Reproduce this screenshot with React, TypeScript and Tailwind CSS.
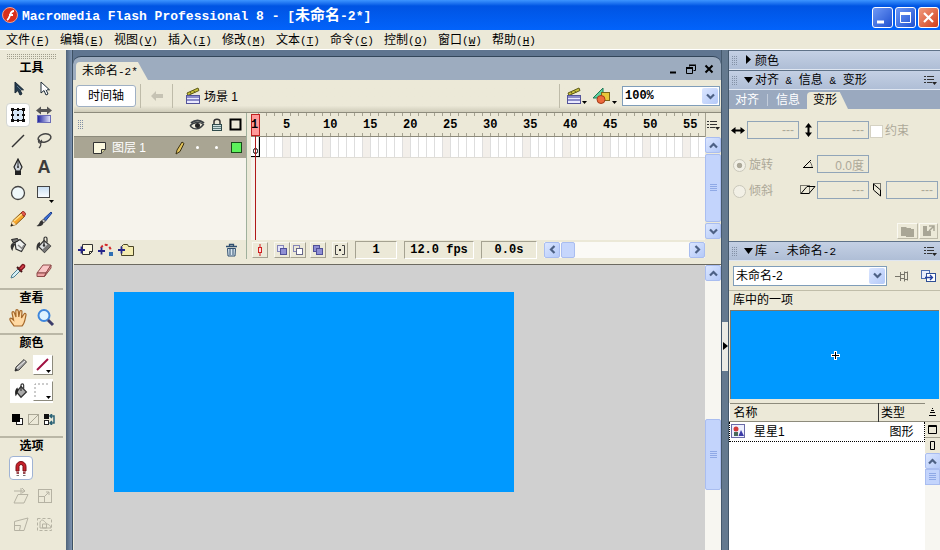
import { useState } from "react";
import type { ReactNode } from "react";
import clsx from "clsx";

const MENUS = [
  ["文件", "F"],
  ["编辑", "E"],
  ["视图", "V"],
  ["插入", "I"],
  ["修改", "M"],
  ["文本", "T"],
  ["命令", "C"],
  ["控制", "O"],
  ["窗口", "W"],
  ["帮助", "H"],
];

const FRAMES = Array.from({ length: 57 }, (_, i) => i + 1);

type IconProps = { w?: number; h?: number; box?: string; children: ReactNode };

const Icon = ({ w = 18, h = 18, box, children }: IconProps) => (
  <svg
    width={w}
    height={h}
    viewBox={box ?? `0 0 ${w} ${h}`}
    fill="none"
    className="shrink-0"
    aria-hidden="true">
    {children}
  </svg>
);

// Latin letters sit at about half the width of a Chinese glyph
const Latin = ({ children }: { children: ReactNode }) => (
  <span className="font-['Liberation_Mono','Noto_Sans_CJK_SC',monospace] text-[11px] whitespace-pre">
    {children}
  </span>
);

/* ---------- tool icons ---------- */

const Arrow = ({ fill }: { fill: string }) => (
  <Icon>
    <path d="M6 2v11l3-2.500 2 4.500 2-1-2-4.200h3.500z" fill={fill} stroke="#1c2b38" />
    <path d="M8 6l4 4" stroke={fill === "white" ? "white" : "#5f7a92"} />
  </Icon>
);

const FreeTransform = () => (
  <Icon>
    <rect x="3.500" y="3.500" width="11" height="11" fill="#d5e6f6" stroke="#111" />
    {[2, 8, 13].map((x) =>
      [2, 8, 13].map((y) => (
        <rect
          key={`${x}-${y}`}
          x={x}
          y={y}
          width={x === 8 ? 2 : 3}
          height={y === 8 ? 2 : 3}
          fill="#111"
        />
      ))
    )}
  </Icon>
);

const GradientTool = () => (
  <Icon>
    <defs>
      <linearGradient id="blueRamp">
        <stop offset="0" stopColor="#1b1f9a" />
        <stop offset="1" stopColor="#e6e8ff" />
      </linearGradient>
    </defs>
    <path d="M1 4.500l5-4v2.500h6V.5l5 4-5 4V6H6v2.500z" fill="#555" />
    <rect x="2.500" y="9.500" width="13" height="7" fill="url(#blueRamp)" stroke="#6a6cb8" />
  </Icon>
);

const LineTool = () => (
  <Icon>
    <path d="M3 15L15 3" stroke="#333" strokeWidth="1.400" />
  </Icon>
);

const Lasso = () => (
  <Icon>
    <ellipse cx="9.500" cy="6" rx="6.500" ry="4" stroke="#444" strokeWidth="1.500" transform="rotate(-12 9.5 6)" />
    <path d="M5 8c-2 0-2 3 0 3s2-2 1-3M5 11c2 1 0 4-1 5" stroke="#444" strokeWidth="1.300" />
  </Icon>
);

const Pen = () => (
  <Icon>
    <path d="M9 1L5 9l2 4h4l2-4z" fill="#cfd6dd" stroke="#222" strokeWidth="1.200" />
    <path d="M9 2v6" stroke="#222" />
    <circle cx="9" cy="9" r="1" fill="#222" />
    <rect x="6" y="13" width="6" height="4" fill="#222" />
  </Icon>
);

const TextTool = () => (
  <span className="font-['Liberation_Sans',sans-serif] text-[18px] leading-5 font-bold text-[#3c3c3c]">
    A
  </span>
);

const Oval = () => (
  <Icon>
    <circle cx="9" cy="9" r="6.500" fill="#f0f8fa" stroke="#444" strokeWidth="1.300" />
  </Icon>
);

const RectTool = () => (
  <Icon w={20} h={20}>
    <defs>
      <linearGradient id="skyFill" x2="0" y2="1">
        <stop offset="0" stopColor="#c8def2" />
        <stop offset="1" stopColor="#fbfdff" />
      </linearGradient>
    </defs>
    <rect x="3.500" y="3.500" width="12" height="11" fill="url(#skyFill)" stroke="#444" />
    <path d="M15 17h5l-2.500 3z" fill="black" />
  </Icon>
);

const Pencil = () => (
  <Icon>
    <path d="M2 16l1.500-5L12 3l3.500 3.500L7 14.500z" fill="#f6a52a" stroke="#8a5a13" />
    <path d="M12 3l1.500-1.500c1-.8 3.700 2 3 3L15 6.500z" fill="#e0564a" stroke="#8f2c22" />
    <path d="M5 11l8-7" stroke="#ffe08a" strokeWidth="1.500" />
    <path d="M2 16l1.500-5L7 14.500z" fill="#f4dfb8" />
    <path d="M1.500 16.500l1-3 2 2z" fill="#222" />
  </Icon>
);

const Brush = () => (
  <Icon>
    <path d="M16 2L8.500 9l2 2L17 3z" fill="#3a6fd8" stroke="#1e3f8f" />
    <path d="M8.500 9l2 2-2 2-2-2z" fill="#c9c9c9" stroke="#555" />
    <path d="M7 10.500C4 11 5 14.500 1.500 16c4 1 7-1 7-3.500z" fill="#333" />
  </Icon>
);

const InkBottle = () => (
  <Icon>
    <path d="M6 6.500l5-3 5.500 5-4 7L7 13z" fill="#eef0ee" stroke="#333" strokeWidth="1.200" />
    <path d="M2.500 3.500l6-1 1 2-5 2.500z" fill="#777" stroke="#222" />
    <path d="M4 7c-3.500 1-2.500 6-.5 8 .5-3 1-5 3.500-7z" fill="#333" />
    <path d="M9 9l4 3.500 2-3.500" stroke="#888" strokeWidth="1.500" />
  </Icon>
);

const PaintBucket = () => (
  <Icon>
    <path d="M9 4.500l6.500 5.500-6 6.500-6-6z" fill="#dcdfe0" stroke="#333" strokeWidth="1.200" />
    <path d="M9 9V2.500c0-2 3-2 3 0v4" stroke="#333" strokeWidth="1.200" />
    <path d="M7 14l6-6 2.500 2-6 6.500z" fill="#777" />
    <path d="M5 6C1.500 7 1 11 2 15c1.500-2 1-4 3-6z" fill="#333" />
    <circle cx="9" cy="9.500" r="1.200" fill="#333" />
  </Icon>
);

const Eyedropper = () => (
  <Icon>
    <path d="M2 16l1-3 6-6 2 2-6 6z" fill="#d5eff5" stroke="#4f7f90" />
    <path d="M8 5l5 5" stroke="#3d1216" strokeWidth="2" />
    <path d="M10 6.500L13 3c1-1.500 3.500.5 2.500 2L12 8.500z" fill="#d8404a" stroke="#7e1a22" strokeWidth="1.300" />
  </Icon>
);

const Eraser = () => (
  <Icon>
    <path d="M2 11l6-8h8l-5 8z" fill="#f9c6c6" stroke="#8e4a4a" />
    <path d="M2 11v3.500h7.500L11 11zM11 11l5-8v3l-6.500 8.500z" fill="#eda3a3" stroke="#8e4a4a" />
  </Icon>
);

const Hand = () => (
  <Icon w={20} h={20}>
    <path
      d="M6 18C4 15 1 12 2 10.500c1-1 2.500.5 3.500 1.500L4 5c0-1.800 2-1.800 2.500 0L8 9 7.800 3c0-1.800 2.200-1.800 2.500 0l.5 6 1-5.500c.4-1.500 2.300-1.200 2.200.3L13.500 10 16 6c.8-1.400 2.400-.5 2 1-1 4-1 8-4 11z"
      fill="#ffd9a3"
      stroke="#a5682a"
      strokeWidth="1.200"
    />
  </Icon>
);

const Magnifier = () => (
  <Icon w={20} h={20}>
    <circle cx="8" cy="7.500" r="5.500" fill="#dff3ff" stroke="#3e86dc" strokeWidth="2" />
    <path d="M12 12l5 5" stroke="#3d3d6b" strokeWidth="3" />
  </Icon>
);

const StrokePencil = () => (
  <Icon w={16} h={16}>
    <path d="M2 14l1-4 8-7.500 2.500 2.500L6 13z" fill="#a5a5a5" stroke="#444" />
    <path d="M4 11l8-7" stroke="#eee" />
    <path d="M2 14l.7-2.500L5 13z" fill="#222" />
  </Icon>
);

const MiniBucket = () => (
  <Icon w={16} h={16} box="0 0 18 18">
    <path d="M9 4l6 6-6 6-5-6z" fill="#aaa" stroke="#333" strokeWidth="1.500" />
    <path d="M9 9V2.500c0-2 3-2 3 0v4" stroke="#333" strokeWidth="1.300" />
    <path d="M5 5C2 7 2 11 3 15c2-2 1-4 3-6z" fill="#222" />
  </Icon>
);

const Magnet = () => (
  <Icon>
    <path d="M4 12V7.500a5 5 0 0110 0V12h-3V7.500a2 2 0 00-4 0V12z" fill="#c8202a" stroke="#7a0f16" />
    <path d="M4.500 14H7M11 14h2.500" stroke="#7a0f16" strokeWidth="1.500" />
    <path d="M4.500 16.500H7M11 16.500h2.500" stroke="#777" />
  </Icon>
);

const GhostSkew = () => (
  <Icon>
    <path d="M6 7.500h10L12 16H2zM2 4h11M9 1v6M10 1l3 3-3 2" stroke="#b5b2a3" />
  </Icon>
);
const GhostScale = () => (
  <Icon>
    <rect x="2.500" y="2.500" width="13" height="13" stroke="#b5b2a3" />
    <rect x="2.500" y="9.500" width="6" height="6" stroke="#b5b2a3" />
    <path d="M9 9l4-4M10 5h3v3" stroke="#b5b2a3" />
  </Icon>
);
const GhostDistort = () => (
  <Icon>
    <path d="M2.500 6.500L16 3l-4 12.500H2.500z" stroke="#b5b2a3" />
    <path d="M2.500 10.500h6l-1 5" stroke="#b5b2a3" />
  </Icon>
);
const GhostEnvelope = () => (
  <Icon>
    <rect x="1.500" y="3.500" width="14" height="12" stroke="#b5b2a3" strokeDasharray="3 2" />
    <path d="M4 13V7c2-4 4-1 6 1s4 1 5 5z" stroke="#b5b2a3" />
    <path d="M6.500 13V9h4v4z" stroke="#b5b2a3" />
  </Icon>
);

const TOOLS = [
  { name: "选择", icon: <Arrow fill="#243a4d" /> },
  { name: "部分选取", icon: <Arrow fill="white" /> },
  { name: "任意变形", icon: <FreeTransform /> },
  { name: "填充变形", icon: <GradientTool /> },
  { name: "线条", icon: <LineTool /> },
  { name: "套索", icon: <Lasso /> },
  { name: "钢笔", icon: <Pen /> },
  { name: "文本", icon: <TextTool /> },
  { name: "椭圆", icon: <Oval /> },
  { name: "矩形", icon: <RectTool /> },
  { name: "铅笔", icon: <Pencil /> },
  { name: "刷子", icon: <Brush /> },
  { name: "墨水瓶", icon: <InkBottle /> },
  { name: "颜料桶", icon: <PaintBucket /> },
  { name: "滴管", icon: <Eyedropper /> },
  { name: "橡皮擦", icon: <Eraser /> },
];

/* ---------- small shared pieces ---------- */

const Clapper = () => (
  <Icon w={16} h={18}>
    <path d="M2 6l11-5 1 2.500L3 8.500z" fill="#c9c23c" stroke="#5e5a18" />
    <path d="M5 5l1.500 2M8.500 3.500L10 5.500" stroke="#5e5a18" />
    <rect x="1.500" y="8.500" width="13" height="8" fill="#e9e9ff" stroke="#54549a" />
    <path d="M2 10h12M2 13h12" stroke="#6c6cb8" strokeWidth="1.500" />
  </Icon>
);

const Chevron = ({ turn = "" }: { turn?: string }) => (
  <svg width="9" height="9" viewBox="0 0 9 9" fill="none" className={turn} aria-hidden="true">
    <path d="M1 2.500L4.500 6 8 2.500" stroke="#4d6185" strokeWidth="2.200" />
  </svg>
);

const ScrollButton = ({ label, turn }: { label: string; turn?: string }) => (
  <button
    aria-label={label}
    className="flex size-4 shrink-0 items-center justify-center rounded-xs border border-[#a9bdf0] bg-gradient-to-br from-[#dbe6ff] to-[#b4c9f8]">
    <Chevron turn={turn} />
  </button>
);

const ThumbLines = () => (
  <Icon w={7} h={8}>
    <path d="M0 .5h7M0 2.500h7M0 4.500h7M0 6.500h7" stroke="#8fa9e6" />
  </Icon>
);

const Grip = () => (
  <span className="grid shrink-0 grid-cols-3 gap-px" aria-hidden="true">
    {Array.from({ length: 15 }, (_, i) => (
      <i key={i} className="size-px bg-[#8290a5]" />
    ))}
  </span>
);

const OptionsMenu = () => (
  <button aria-label="面板选项" className="shrink-0">
    <Icon w={13} h={11}>
      <path d="M0 1.500h2M0 4.500h2M0 7.500h2M3 1.500h7M3 4.500h7M3 7.500h5" stroke="#333" />
      <path d="M8 7h5l-2.500 3z" fill="#222" />
    </Icon>
  </button>
);

type ComboProps = { label: string; value: string; className: string };

const Combo = ({ label, value, className }: ComboProps) => (
  <div className={clsx("relative flex h-5 border border-[#7f9db9] bg-white", className)}>
    <select
      aria-label={label}
      defaultValue={value}
      className="w-full appearance-none bg-transparent pl-[2px] outline-none">
      <option>{value}</option>
    </select>
    <span className="pointer-events-none absolute inset-y-px right-px flex w-4 items-center justify-center rounded-xs bg-gradient-to-br from-[#dbe6ff] to-[#b4c9f8]">
      <Chevron />
    </span>
  </div>
);

type PanelHeaderProps = { open: boolean; children: ReactNode; options?: boolean };

const PanelHeader = ({ open, children, options }: PanelHeaderProps) => (
  <header className="flex h-5 shrink-0 items-center border-t border-b border-t-[#5f7288] border-b-[#dfe6f1] bg-gradient-to-b from-[#c4d0e4] to-[#afbed6] px-[3px]">
    <Grip />
    <button className="flex flex-1 items-center gap-px pl-[7px] text-left">
      <Icon w={10} h={10}>
        {open ? <path d="M0 2h9L4.500 8z" fill="black" /> : <path d="M2 0v9l5-4.500z" fill="black" />}
      </Icon>
      <span className="pt-px">{children}</span>
    </button>
    {options && <OptionsMenu />}
  </header>
);

/* ---------- chrome ---------- */

const TitleBar = () => (
  <header className="flex h-[30px] shrink-0 items-center bg-gradient-to-b from-[#3d95ff] via-[#0054e3] via-20% to-[#0263fb] pr-[1px] pl-[2px]">
    <Icon w={16} h={16}>
      <circle cx="8" cy="8" r="7.500" fill="#d8301c" stroke="#f5a08f" />
      <path d="M5 13c2-1 2.500-3 3.200-5.500C9 5 10 4 12 4M7 8h4" stroke="white" strokeWidth="1.800" />
    </Icon>
    <h1 className="flex-1 pt-1 pl-1 font-['Liberation_Mono','Noto_Sans_CJK_SC',monospace] text-[13px] leading-5 font-bold whitespace-nowrap text-white">
      Macromedia Flash Professional 8 - [<span className="text-[15px]">未命名</span>-2*]
    </h1>
    <div className="flex gap-[2px] pt-1">
      <button aria-label="最小化" className="rounded-[3px] border border-white bg-gradient-to-br from-[#6f98f5] to-[#1f4fd0]">
        <Icon w={19} h={19}>
          <path d="M4 14h7" stroke="white" strokeWidth="3" />
        </Icon>
      </button>
      <button aria-label="最大化" className="rounded-[3px] border border-white bg-gradient-to-br from-[#6f98f5] to-[#1f4fd0]">
        <Icon w={19} h={19}>
          <path d="M4.500 5v9.500h10V5" stroke="white" />
          <path d="M4 5.500h11" stroke="white" strokeWidth="3" />
        </Icon>
      </button>
      <button aria-label="关闭" className="rounded-[3px] border border-white bg-gradient-to-br from-[#f09a7c] to-[#cf3a14]">
        <Icon w={19} h={19}>
          <path d="M5 5l9 9M14 5l-9 9" stroke="white" strokeWidth="2.200" />
        </Icon>
      </button>
    </div>
  </header>
);

const MenuBar = () => (
  <nav className="flex h-5 shrink-0 items-center border-b border-white bg-[#ece9d8] px-[6px] pt-[2px]">
    {MENUS.map(([name, key]) => (
      <button key={key} className="w-[54px] text-left whitespace-nowrap">
        {name}
        <Latin>
          (<u>{key}</u>)
        </Latin>
      </button>
    ))}
  </nav>
);

const ToolHeading = ({ children }: { children: ReactNode }) => (
  <h2 className="h-4 text-center leading-4 font-bold">{children}</h2>
);

const ToolBox = () => {
  const [tool, setTool] = useState("任意变形");

  return (
    <aside className="w-[66px] shrink-0 bg-[#ece9d8] pt-1 pr-[3px]">
      <div className="mx-[7px] grid h-[6px] grid-rows-3" aria-hidden="true">
        <i className="border-t border-dotted border-[#a09d8c]" />
        <i className="border-t border-dotted border-[#a09d8c]" />
        <i className="border-t border-dotted border-[#a09d8c]" />
      </div>
      <ToolHeading>工具</ToolHeading>
      <div className="grid grid-cols-[26px_26px] pl-[5px]">
        {TOOLS.map(({ name, icon }) => (
          <button
            key={name}
            aria-label={name}
            onClick={() => setTool(name)}
            className={clsx(
              "m-px flex size-6 items-center justify-center rounded-sm",
              tool === name && "border border-[#d3d6d3] bg-white"
            )}>
            {icon}
          </button>
        ))}
      </div>
      <section className="mt-1 border-t-2 border-[#bab7a6]">
        <ToolHeading>查看</ToolHeading>
        <div className="flex h-[27px] items-center gap-1 pb-1 pl-2">
          <button aria-label="手形工具"><Hand /></button>
          <button aria-label="缩放工具" className="pl-1"><Magnifier /></button>
        </div>
      </section>
      <section className="border-t-2 border-[#bab7a6]">
        <ToolHeading>颜色</ToolHeading>
        <div className="ml-[10px] flex h-7 w-[43px] items-center gap-1">
          <span className="pl-[3px]"><StrokePencil /></span>
          <button aria-label="笔触颜色" className="border border-white border-r-[#8c8a7c] border-b-[#8c8a7c] bg-white">
            <Icon w={18} h={18}>
              <path d="M3 14L14 3" stroke="#a01040" strokeWidth="2" />
              <path d="M12 14h5l-2.500 3z" fill="black" />
            </Icon>
          </button>
        </div>
        <div className="ml-[10px] flex h-6 w-[43px] items-center gap-1 bg-white">
          <span className="pl-[3px]"><MiniBucket /></span>
          <button aria-label="填充色" className="border border-white border-r-[#8c8a7c] border-b-[#8c8a7c] bg-white">
            <Icon w={18} h={18}>
              <path d="M1 15V2h14" stroke="#999" strokeDasharray="2 2" />
              <path d="M12 14h5l-2.500 3z" fill="black" />
            </Icon>
          </button>
        </div>
        <div className="flex h-[33px] items-center gap-[5px] pl-3">
          <button aria-label="黑白">
            <Icon w={11} h={11}>
              <rect x="4.500" y="4.500" width="6" height="6" fill="white" stroke="#222" />
              <rect width="8" height="8" fill="black" />
            </Icon>
          </button>
          <button aria-label="没有颜色">
            <Icon w={11} h={11}>
              <rect x=".5" y=".5" width="10" height="10" stroke="#aaa796" />
              <path d="M1 10l9-9" stroke="#aaa796" />
            </Icon>
          </button>
          <button aria-label="交换颜色">
            <Icon w={12} h={11}>
              <rect width="5" height="5" fill="#111" />
              <rect x=".5" y="6.500" width="4" height="4" fill="white" stroke="#222" />
              <path d="M6 2h4v7H6M8 0L6 2l2 2M8 7L6 9l2 2" stroke="#2a6275" strokeWidth="1.500" />
            </Icon>
          </button>
        </div>
      </section>
      <section className="border-t-2 border-[#bab7a6]">
        <ToolHeading>选项</ToolHeading>
        <div className="grid grid-cols-[24px_24px] gap-y-1 pt-[2px] pl-[9px]">
          <button
            aria-label="紧贴至对象"
            className="col-span-2 flex size-6 items-center justify-center rounded-sm border border-[#9fb3d4] bg-white">
            <Magnet />
          </button>
          {[<GhostSkew />, <GhostScale />, <GhostDistort />, <GhostEnvelope />].map((icon, i) => (
            <button key={i} disabled aria-label={`变形选项 ${i + 1}`} className="flex size-6 items-center justify-center">
              {icon}
            </button>
          ))}
        </div>
      </section>
    </aside>
  );
};

/* ---------- document window ---------- */

const DocumentTabs = () => (
  <div className="flex h-6 shrink-0 items-end rounded-t-lg border-t border-[#33465a] bg-[#9dacbf] pl-[3px]">
    <button className="h-[18px] w-[72px] rounded-tl-sm bg-[#ece9d8] pl-[6px] text-left leading-[18px] [clip-path:polygon(0_0,86%_0,100%_100%,0_100%)]">
      未命名<Latin>-2*</Latin>
    </button>
    <div className="ml-auto flex h-full items-center gap-[8px] pr-[7px]">
      <button aria-label="最小化文档">
        <Icon w={10} h={10}><path d="M2 8.500h6" stroke="black" strokeWidth="2" /></Icon>
      </button>
      <button aria-label="还原文档">
        <Icon w={10} h={10}>
          <path d="M3.500 2.500V1.500h6v5h-2M3 1h7" stroke="black" />
          <path d="M.5 4v5.500h6V4" stroke="black" />
          <path d="M0 4h7" stroke="black" strokeWidth="2" />
        </Icon>
      </button>
      <button aria-label="关闭文档">
        <Icon w={10} h={10}><path d="M1.500 1.500l7 7M8.500 1.500l-7 7" stroke="black" strokeWidth="2" /></Icon>
      </button>
    </div>
  </div>
);

const EditBar = () => (
  <div className="flex h-[33px] shrink-0 items-center border-b border-[#8d8b7c] bg-gradient-to-b from-[#ece9d8] from-80% to-[#cfccb9] pr-[1px] pl-[2px]">
    <button className="h-[22px] w-[60px] rounded-[3px] border border-[#9fb0c4] bg-white">时间轴</button>
    <div className="ml-1 flex h-6 w-[33px] items-center justify-center border-x border-[#bebba9]">
      <Icon w={14} h={12}>
        <path d="M6 1L1 6l5 5V8h7V4H6z" fill="#c6c3b4" />
      </Icon>
    </div>
    <div className="flex items-center gap-[3px] pl-3">
      <Clapper />
      <span className="pt-px">场景 1</span>
    </div>
    <div className="ml-auto flex h-6 items-center border-l border-[#bebba9] pl-[6px]">
      <button aria-label="编辑场景" className="flex items-end">
        <Clapper />
        <Icon w={6} h={4}><path d="M0 0h5L2.500 3z" fill="black" /></Icon>
      </button>
      <button aria-label="编辑元件" className="flex items-end pr-1 pl-1">
        <Icon w={20} h={18}>
          <path d="M1 11L11 1v10z" fill="#5fd0a0" stroke="#1c7a56" />
          <rect x="9.500" y="5.500" width="8" height="8" fill="#e8c63a" stroke="#7a651a" />
          <circle cx="9" cy="12.500" r="4" fill="#ee6a3c" stroke="#a33a18" />
        </Icon>
        <Icon w={6} h={4}><path d="M0 0h5L2.500 3z" fill="black" /></Icon>
      </button>
      <Combo
        label="缩放比例"
        value="100%"
        className="w-[98px] font-['Liberation_Mono',monospace] font-bold"
      />
    </div>
  </div>
);

const LayerList = () => (
  <div className="flex w-[173px] shrink-0 flex-col border-r border-[#9fb09c]">
    <div className="flex h-6 items-center justify-end gap-[6px] border-b border-[#8d8b7c] bg-[#ece9d8] pr-1">
      <span className="mr-auto pl-1"><Grip /></span>
      <Icon w={16} h={12}>
        <path d="M1 7c3-4 10-5 14-1M1 7c4 4 9 4 13-1" stroke="#3a3f42" strokeWidth="1.300" />
        <path d="M2 4c4-3 9-3 13 0" stroke="#3a3f42" strokeWidth="2" />
        <circle cx="8.500" cy="6.500" r="2.500" fill="#222" />
      </Icon>
      <Icon w={12} h={14}>
        <path d="M3 6V3.500C3 .5 9 .5 9 3.500V6" stroke="#333" strokeWidth="1.500" />
        <rect x="1.500" y="6.500" width="9" height="6" fill="#cfe0e0" stroke="#2f4b4b" />
        <path d="M2 8.500h8M2 10.500h8" stroke="#5c7a7a" />
      </Icon>
      <Icon w={13} h={13}><rect x="1.500" y="1.500" width="10" height="10" stroke="black" strokeWidth="2" /></Icon>
    </div>
    <div className="flex h-[21px] items-center bg-[#a9a593] pr-1 pl-[19px] text-white">
      <Icon w={13} h={12}>
        <path d="M.5.5h12v7l-4 4H.5z" fill="#fbf8df" stroke="#333" />
        <path d="M12.500 7.500h-4v4" fill="#d6d29c" stroke="#333" />
      </Icon>
      <span className="pt-px pl-[6px]">图层 1</span>
      <span className="ml-auto flex items-center">
        <Icon w={10} h={14}>
          <path d="M1 13l1-4 5-8 2 1.500-4 8z" fill="#e2c25a" stroke="#3a3010" />
        </Icon>
        <i className="ml-[11px] size-[3px] rounded-full bg-white" />
        <i className="ml-4 size-[3px] rounded-full bg-white" />
        <i className="ml-[13px] size-[11px] border border-[#174a17] bg-[#5cf25c]" />
      </span>
    </div>
    <div className="flex-1 bg-[#f6f3ec]" />
    <div className="flex h-[19px] items-center gap-1 bg-[#ece9d8] pr-2 pl-1">
      <button aria-label="插入图层">
        <Icon w={16} h={14}>
          <path d="M4.500 1.500h10v7l-3 3h-7z" fill="#fbf8df" stroke="#333" />
          <path d="M14.500 8.500h-3v3" stroke="#333" />
          <path d="M0 7h7M3.500 3.500v7" stroke="#26268a" strokeWidth="1.800" />
        </Icon>
      </button>
      <button aria-label="添加运动引导层">
        <Icon w={16} h={14}>
          <path d="M3 5c2-5 9-4 10 3" stroke="#d42a2a" strokeWidth="2" strokeDasharray="3 2" />
          <rect x="11" y="9" width="4" height="4" fill="#2f6fb4" />
          <path d="M0 8h7M3.500 4.500v7" stroke="#26268a" strokeWidth="1.800" />
        </Icon>
      </button>
      <button aria-label="插入图层文件夹">
        <Icon w={16} h={14}>
          <path d="M3.500 12.500v-9l2-2h4l1 2h5v9z" fill="#f4ecb0" stroke="#4a4526" />
          <path d="M0 7h7M3.500 3.500v7" stroke="#26268a" strokeWidth="1.800" />
        </Icon>
      </button>
      <button aria-label="删除图层" className="ml-auto">
        <Icon w={13} h={14}>
          <path d="M1 3.500h11M4.500 3V1.500h4V3" stroke="#2f4f6f" strokeWidth="1.300" />
          <path d="M2.500 5.500h8l-.5 7.500H3z" fill="#d9e6ef" stroke="#2f4f6f" />
          <path d="M5 6v6M8 6v6" stroke="#2f4f6f" />
        </Icon>
      </button>
    </div>
  </div>
);

const StatusBox = ({ width, children }: { width: string; children: ReactNode }) => (
  <span
    className={clsx(
      "h-[18px] shrink-0 border border-[#a5a291] border-r-white border-b-white text-center font-['Liberation_Mono',monospace] leading-[17px] font-bold",
      width
    )}>
    {children}
  </span>
);

const FrameButton = ({ label, children }: { label: string; children: ReactNode }) => (
  <button
    aria-label={label}
    className="flex size-4 shrink-0 items-center justify-center border border-[#f8f7f0] border-r-[#a5a291] border-b-[#a5a291]">
    <Icon w={12} h={12}>{children}</Icon>
  </button>
);

const Frames = () => (
  <div className="flex min-w-0 flex-1 flex-col bg-[#ece9d8]">
    <div className="relative ml-1 flex flex-1 flex-col bg-[#f6f3ec]">
      <div className="flex h-6 overflow-hidden border-b border-[#8d8b7c] bg-[#ece9d8]">
        {FRAMES.map((n) => (
          <div key={n} className="flex w-2 shrink-0 flex-col justify-between">
            <i className="h-[3px] border-r border-[#a5a291]" />
            <span className="relative z-10 h-4 font-['Liberation_Mono',monospace] leading-4 font-bold">
              {n === 1 || n % 5 === 0 ? n : ""}
            </span>
            <i className="h-[3px] border-r border-[#a5a291]" />
          </div>
        ))}
      </div>
      <div className="flex h-[21px] overflow-hidden border-b border-[#e0ddd6]">
        {FRAMES.map((n) => (
          <i
            key={n}
            className={clsx(
              "w-2 shrink-0 border-r border-[#dedede]",
              n % 5 === 0 ? "bg-[#f3efea]" : "bg-white"
            )}
          />
        ))}
      </div>
      {/* first keyframe, with the playhead over it */}
      <div className="absolute top-6 left-0 flex h-[20px] w-[9px] items-end justify-center border-r border-b border-black pb-[2px]">
        <i className="h-[6px] w-[5px] rounded-full border border-black" />
      </div>
      <div className="absolute top-px bottom-0 left-0 flex w-[9px] flex-col items-center">
        <i className="h-[22px] w-full border border-[#c02020] bg-[#ff9a9a]" />
        <i className="w-px flex-1 bg-[#b01818]" />
      </div>
    </div>
    <div className="flex h-[19px] items-center pl-[5px]">
      <FrameButton label="滚动到播放头">
        <path d="M6 0v12" stroke="#d02020" />
        <rect x="4.500" y="3.500" width="3" height="5" fill="#ffd9d9" stroke="#d02020" />
      </FrameButton>
      <span className="flex pl-[6px]">
        <FrameButton label="绘图纸外观">
          <rect x="1.500" y="1.500" width="6" height="6" fill="#e5e5fa" stroke="#8484b8" />
          <rect x="4.500" y="4.500" width="6" height="6" fill="#8f8fd4" stroke="#50509a" />
        </FrameButton>
        <FrameButton label="绘图纸外观轮廓">
          <rect x="1.500" y="1.500" width="6" height="6" stroke="#8484b8" />
          <rect x="4.500" y="4.500" width="6" height="6" fill="white" stroke="#666688" />
        </FrameButton>
      </span>
      <span className="flex gap-[6px] pl-1">
        <FrameButton label="编辑多个帧">
          <rect x="1.500" y="1.500" width="6" height="6" fill="#8f8fd4" stroke="#50509a" />
          <rect x="4.500" y="4.500" width="6" height="6" fill="#8f8fd4" stroke="#50509a" />
        </FrameButton>
        <FrameButton label="修改绘图纸标记">
          <path d="M4 1.500H1.500v9H4M8 1.500h2.500v9H8" stroke="#444" />
          <path d="M5 6h2" stroke="#222" strokeWidth="2" />
        </FrameButton>
      </span>
      <span className="flex flex-1 gap-[7px] pl-[7px]">
        <StatusBox width="w-[42px]">1</StatusBox>
        <StatusBox width="w-[70px]">12.0 fps</StatusBox>
        <StatusBox width="w-14">0.0s</StatusBox>
      </span>
      <div className="flex h-4 w-[161px] shrink-0 bg-[#fbfaf6]">
        <ScrollButton label="向左滚动" turn="rotate-90" />
        <span className="ml-px w-[14px] rounded-xs border border-[#a9bdf0] bg-[#c6d6fc]" />
        <span className="flex-1" />
        <ScrollButton label="向右滚动" turn="-rotate-90" />
      </div>
    </div>
  </div>
);

const Timeline = () => (
  <div className="flex h-[146px] shrink-0">
    <LayerList />
    <Frames />
    <div className="flex w-4 shrink-0 flex-col bg-[#ece9d8]">
      <div className="flex h-6 items-center justify-center border-l border-[#a5a291]">
        <OptionsMenu />
      </div>
      <ScrollButton label="向上滚动" turn="rotate-180" />
      <span className="my-px flex flex-1 items-center justify-center rounded-xs border border-[#a9bdf0] bg-[#c3d4fc]">
        <ThumbLines />
      </span>
      <ScrollButton label="向下滚动" />
      <span className="h-5" />
    </div>
  </div>
);

const Stage = () => (
  <div className="flex min-h-0 flex-1 border-t border-[#6c6a60] bg-[#d0d0d0]">
    <div className="min-w-0 flex-1 pt-[27px] pl-10">
      <div className="h-[200px] w-[400px] bg-[#0099ff]" />
    </div>
    <div className="flex w-4 shrink-0 flex-col bg-[#f7f6f1]">
      <ScrollButton label="舞台向上滚动" turn="rotate-180" />
      <span className="mt-[138px] flex h-[71px] items-center justify-center rounded-xs border border-[#a9bdf0] bg-[#c3d4fc]">
        <ThumbLines />
      </span>
    </div>
  </div>
);

const DocumentWindow = () => (
  <main className="flex min-w-0 flex-1 flex-col pt-[6px]">
    <DocumentTabs />
    <div className="flex min-h-0 flex-1 flex-col bg-[#ece9d8] pl-px">
      <EditBar />
      <Timeline />
      <span className="h-[5px] shrink-0" />
      <Stage />
    </div>
  </main>
);

/* ---------- right dock ---------- */

const NumberBox = ({ label, value = "---" }: { label: string; value?: string }) => (
  <input
    aria-label={label}
    defaultValue={value}
    disabled
    className="h-[18px] w-[52px] border border-[#91a5b8] bg-transparent pr-1 text-right text-[#aca899]"
  />
);

const TRANSFORM_ROW =
  "grid h-[18px] grid-cols-[18px_52px_18px_52px_17px_52px] items-center justify-items-center";

const RadioRow = ({ label, checked }: { label: string; checked?: boolean }) => (
  <label className="col-span-2 flex items-center gap-[3px] justify-self-start pt-[2px] pl-1 text-[#aca899]">
    <input
      type="radio"
      name="transform"
      disabled
      defaultChecked={checked}
      className="size-[13px] appearance-none rounded-full border border-[#c9c7ba] bg-[#f2f0e6] checked:border-[#c9c7ba] checked:bg-[radial-gradient(#aca899_30%,#f2f0e6_40%)]"
    />
    {label}
  </label>
);

const TransformPanel = () => (
  <section className="h-[132px] shrink-0 bg-[#ece9d8] pt-3">
    <div className={TRANSFORM_ROW}>
      <Icon w={14} h={9}>
        <path d="M0 4.500L4.500 1v7zM14 4.500L9.500 1v7z" fill="black" />
        <path d="M3 4.500h8" stroke="black" strokeWidth="2" />
      </Icon>
      <NumberBox label="宽度" />
      <Icon w={9} h={14}>
        <path d="M4.500 0L1 4.500h7zM4.500 14L1 9.500h7z" fill="black" />
        <path d="M4.500 3v8" stroke="black" strokeWidth="2" />
      </Icon>
      <NumberBox label="高度" />
      <label className="col-span-2 flex items-center gap-[2px] justify-self-start pt-[2px] pl-px text-[#aca899]">
        <input
          type="checkbox"
          disabled
          className="size-[13px] appearance-none border border-[#d5d2c3] bg-white"
        />
        约束
      </label>
    </div>
    <div className={clsx(TRANSFORM_ROW, "mt-4")}>
      <RadioRow label="旋转" checked />
      <Icon w={11} h={10}>
        <path d="M0 8.500h10M.5 8.500L8 1" stroke="black" />
        <path d="M7 3c1 1 2 3 2 5" stroke="black" strokeDasharray="1 1" />
      </Icon>
      <NumberBox label="旋转角度" value="0.0度" />
    </div>
    <div className={clsx(TRANSFORM_ROW, "mt-2")}>
      <RadioRow label="倾斜" />
      <Icon w={16} h={10}>
        <path d="M.5 8.500V.5h9v8" stroke="black" strokeDasharray="1 1" />
        <path d="M1 8.500L7 1.500h8L9 8.500z" stroke="black" />
      </Icon>
      <NumberBox label="水平倾斜" />
      <Icon w={9} h={16}>
        <path d="M.5 1.500h7v8" stroke="black" strokeDasharray="1 1" />
        <path d="M.5 2v6l7 6V8z" stroke="black" />
      </Icon>
      <NumberBox label="垂直倾斜" />
    </div>
    <div className="flex justify-end gap-px pt-6 pr-[2px]">
      <button disabled aria-label="拷贝并应用变形" className="border border-[#faf9f2] border-r-[#bdbaa9] border-b-[#bdbaa9] px-[2px] py-px">
        <Icon w={15} h={12}>
          <path d="M1 2h5l1 1h4v1h3v8H6v-1H1z" fill="#a9a696" />
        </Icon>
      </button>
      <button disabled aria-label="重置" className="border border-[#faf9f2] border-r-[#bdbaa9] border-b-[#bdbaa9] px-[2px] py-px">
        <Icon w={13} h={12}>
          <path d="M1 1h4v5h4v5H1z" fill="#a9a696" />
          <path d="M7 1h5v5M12 1L7 6" stroke="#a9a696" strokeWidth="1.500" />
        </Icon>
      </button>
    </div>
  </section>
);

const LibraryPanel = () => (
  <section className="flex min-h-0 flex-1 flex-col bg-[#ece9d8]">
    <div className="flex h-[29px] shrink-0 items-center pr-[4px] pl-1">
      <Combo label="库文档" value="未命名-2" className="w-[154px]" />
      <button aria-label="固定当前库" className="ml-2">
        <Icon w={14} h={12}>
          <path d="M0 6.500h5M5.500 2v9M5.500 4.500h4v4h-4M9.500 1.500v10M12.500 1.500v9M9.500 2.500h3M9.500 9.500h3" stroke="#77756a" />
        </Icon>
      </button>
      <button aria-label="新建库面板" className="ml-auto">
        <Icon w={15} h={12}>
          <rect x=".5" y=".5" width="8" height="8" fill="#e8edfa" stroke="#4d6cae" />
          <rect x="5.500" y="3.500" width="9" height="8" fill="white" stroke="#2f4f95" />
          <path d="M4 7.500h7M9 5l2.500 2.500L9 10" stroke="#2340a0" strokeWidth="1.300" />
        </Icon>
      </button>
    </div>
    <p className="h-5 shrink-0 border-t border-[#c0bda9] pl-1 leading-[19px]">库中的一项</p>
    <div className="mx-px flex h-[89px] shrink-0 items-center justify-center border-t border-l border-[#7a786c] bg-[#0099ff]">
      <Icon w={9} h={9}>
        <path d="M4.500 0v9M0 4.500h9" stroke="white" strokeWidth="3" />
        <path d="M4.500 1v7M1 4.500h7" stroke="black" />
      </Icon>
    </div>
    <div className="mt-1 flex min-h-0 flex-1">
      <div className="min-w-0 flex-1 bg-white">
        <table className="w-full table-fixed border-collapse">
          <thead>
            <tr className="h-[18px] border-t border-b border-t-[#8d8b7c] border-b-[#8d8b7c] bg-[#ece9d8] text-left leading-4">
              <th className="border-r border-[#333] pl-1 font-normal">名称</th>
              <th className="w-[46px] pl-[2px] font-normal">类型</th>
            </tr>
          </thead>
          <tbody>
            <tr className="h-5 border border-dotted border-black leading-4">
              <td>
                <span className="flex items-center gap-2 pl-px">
                  <Icon w={15} h={15}>
                    <rect x=".5" y=".5" width="13" height="13" fill="#eef0ff" stroke="#6a6aa8" />
                    <circle cx="5" cy="5" r="2.500" fill="#d33a3a" />
                    <rect x="3" y="8" width="4" height="4" fill="#4a6a5a" />
                    <path d="M7.500 12l2.500-6 3 6z" fill="#3b3ba8" />
                  </Icon>
                  <span>星星1</span>
                </span>
              </td>
              <td className="pl-[11px]">图形</td>
            </tr>
          </tbody>
        </table>
      </div>
      <div className="flex w-[15px] shrink-0 flex-col items-center bg-[#f7f6f1]">
        <button aria-label="切换排序顺序" className="flex h-[18px] w-full items-center justify-center bg-[#ece9d8]">
          <Icon w={7} h={8}><path d="M3 .5h1M2 2.500h3M1 4.500h5M0 7.500h7" stroke="black" /></Icon>
        </button>
        <button aria-label="宽库视图" className="flex h-4 w-full items-center justify-center border-t border-[#a5a291] bg-[#ece9d8]">
          <Icon w={9} h={9}><path d="M.5.5h8v8h-8zM0 1.500h9" stroke="black" /></Icon>
        </button>
        <button aria-label="窄库视图" className="flex h-4 w-full items-center justify-center border-t border-[#a5a291] bg-[#ece9d8]">
          <Icon w={5} h={9}><path d="M.5.5h4v8h-4z" stroke="black" /></Icon>
        </button>
        <ScrollButton label="库向上滚动" turn="rotate-180" />
        <span className="flex h-4 w-full items-center justify-center border border-[#a9bdf0] bg-[#c3d4fc]">
          <ThumbLines />
        </span>
      </div>
    </div>
  </section>
);

const Dock = () => (
  <aside className="flex w-[211px] shrink-0 flex-col">
    <PanelHeader open={false}>颜色</PanelHeader>
    <PanelHeader open options>
      对齐<Latin> &amp; </Latin>信息<Latin> &amp; </Latin>变形
    </PanelHeader>
    <div className="flex h-[19px] shrink-0 items-end bg-[#9aa9bf] pl-[6px] leading-[18px] text-white">
      <button className="w-8 text-left">对齐</button>
      <button className="mb-[3px] w-10 border-l border-[#c3cddb] pl-2 text-left leading-3">信息</button>
      <button className="h-[17px] w-[41px] rounded-tl-sm bg-[#ece9d8] pl-[6px] text-left leading-[17px] text-black [clip-path:polygon(0_0,80%_0,100%_100%,0_100%)]">
        变形
      </button>
    </div>
    <TransformPanel />
    <PanelHeader open options>
      库<Latin> - </Latin>未命名<Latin>-2</Latin>
    </PanelHeader>
    <LibraryPanel />
  </aside>
);

export default function App() {
  return (
    <div className="flex h-screen flex-col overflow-hidden bg-[#5f7590] font-['Liberation_Sans','Noto_Sans_CJK_SC',sans-serif] text-[12px] leading-4 text-black select-none">
      <TitleBar />
      <MenuBar />
      <div className="flex min-h-0 flex-1">
        <ToolBox />
        <div className="w-[7px] shrink-0 border-r border-[#3d5063] bg-gradient-to-r from-[#4f6379] to-[#7f95b3]" />
        <DocumentWindow />
        <div className="flex w-2 shrink-0 items-center border-x border-[#44586c] bg-[#64798f]">
          <button
            aria-label="折叠面板"
            className="mt-[92px] flex h-[49px] w-full items-center justify-center bg-[#ecebe4]">
            <Icon w={5} h={8}><path d="M0 0v8l5-4z" fill="black" /></Icon>
          </button>
        </div>
        <Dock />
      </div>
    </div>
  );
}
